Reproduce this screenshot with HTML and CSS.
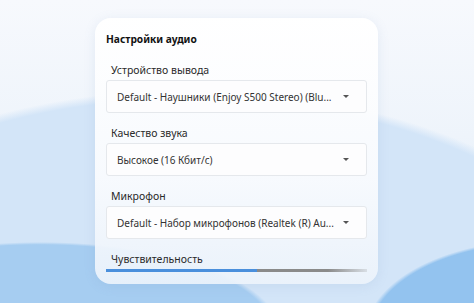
FILE: index.html
```html
<!DOCTYPE html>
<html lang="ru">
<head>
<meta charset="utf-8">
<link rel="stylesheet" href="styles.css">
</head>
<body>
<div class="card">
  <div class="title">Настройки аудио</div>
  <div class="field">
    <div class="label">Устройство вывода</div>
    <div class="select"><span class="value">Default - Наушники (Enjoy S500 Stereo) (Blu...</span><span class="arrow"></span></div>
  </div>
  <div class="field">
    <div class="label">Качество звука</div>
    <div class="select"><span class="value">Высокое (16 Кбит/с)</span><span class="arrow"></span></div>
  </div>
  <div class="field">
    <div class="label">Микрофон</div>
    <div class="select"><span class="value">Default - Набор микрофонов (Realtek (R) Au...</span><span class="arrow"></span></div>
  </div>
  <div class="field last">
    <div class="label">Чувствительность</div>
    <div class="slider"><div class="fill"></div></div>
  </div>
</div>
</body>
</html>
```
FILE: styles.css
```css
html, body {
  margin: 0;
  width: 474px;
  height: 303px;
  overflow: hidden;
}
body {
  box-sizing: border-box;
  padding: 18px 96px 19px 95px;
  font-family: "Noto Sans", "Open Sans", sans-serif;
  background:
    radial-gradient(ellipse 175px 95px at 540px 335px, #93c3ef 97%, rgba(147,195,239,0) 100%),
    radial-gradient(ellipse 240px 90px at 40px 332px, #a6cdf1 97%, rgba(166,205,241,0) 100%),
    radial-gradient(ellipse 480px 290px at 190px 380px, #d3e5f8 97%, rgba(211,229,248,0) 100%),
    linear-gradient(180deg, #f7f9fd 0%, #eef4fb 45%, #d6e6f8 100%);
}
.card {
  height: 100%;
  box-sizing: border-box;
  border-radius: 16px;
  padding: 14px 11px 14px 11px;
  background: linear-gradient(180deg, rgba(255,255,255,0.98) 0%, rgba(249,251,254,0.95) 60%, rgba(236,243,251,0.92) 100%);
  box-shadow: 0 2px 12px rgba(120,150,190,0.14);
  display: flex;
  flex-direction: column;
}
.title {
  font-size: 10.2px;
  font-weight: 700;
  line-height: 14px;
  color: #111;
  margin-bottom: 16px;
}
.field {
  display: flex;
  flex-direction: column;
  margin-bottom: 12px;
}
.field.last { margin-bottom: 0; }
.label {
  font-size: 10.5px;
  line-height: 16px;
  color: #2a2a2a;
  padding-left: 5px;
  margin-bottom: 2px;
}
.select {
  height: 33px;
  box-sizing: border-box;
  border: 1px solid #e5e8ec;
  border-radius: 3px;
  background: #fdfdfe;
  display: flex;
  align-items: center;
  padding: 0 17px 0 10px;
}
.value {
  flex: 1;
  font-size: 10px;
  color: #333;
  white-space: nowrap;
}
.arrow {
  width: 0;
  height: 0;
  border-left: 3px solid transparent;
  border-right: 3px solid transparent;
  border-top: 3px solid #555;
}
.slider {
  height: 3px;
  background: linear-gradient(90deg, #8a8a8a 0%, #8a8a8a 85%, rgba(138,138,138,0.2) 100%);
}
.fill {
  width: 58%;
  height: 100%;
  background: #4a8fdc;
}
```
